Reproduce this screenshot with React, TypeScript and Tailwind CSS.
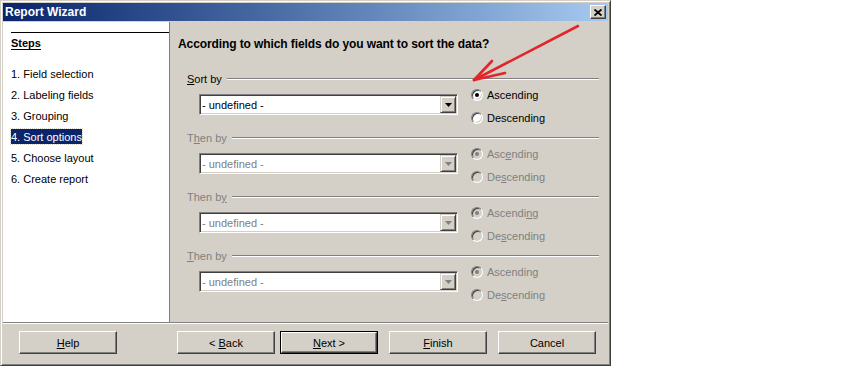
const font = { fontFamily: '"Liberation Sans", Arial, sans-serif' };

const Key = ({ text, k }: { text: string; k: number }) => {
  if (k < 0) return <span className="whitespace-pre">{text}</span>;
  return (
    <span className="whitespace-pre">
      {text.slice(0, k)}
      <span className="underline underline-offset-[1px]">{text[k]}</span>
      {text.slice(k + 1)}
    </span>
  );
};

const Radio = ({ checked, disabled }: { checked: boolean; disabled: boolean }) => (
  <span
    className={`relative flex h-[12px] w-[12px] items-center justify-center rounded-full border border-t-[#808080] border-l-[#808080] border-b-white border-r-white shadow-[inset_1px_1px_#404040,inset_-1px_-1px_#d4d0c8] ${
      disabled ? "bg-[#d4d0c8]" : "bg-white"
    }`}
  >
    {checked && (
      <span className={`h-[4px] w-[4px] rounded-full ${disabled ? "bg-[#808080]" : "bg-black"}`} />
    )}
  </span>
);

const Combo = ({ disabled }: { disabled: boolean }) => (
  <div className="flex h-[21px] w-[259px] items-center border border-t-[#808080] border-l-[#808080] border-b-white border-r-white bg-white shadow-[inset_1px_1px_#404040,inset_-1px_-1px_#d4d0c8]">
    <span className={`flex-1 pl-[2px] text-[11px] leading-[14px] ${disabled ? "text-[#808080]" : "text-black"}`}>
      - undefined -
    </span>
    <span className="mr-[1px] flex h-[17px] w-[16px] items-center justify-center border border-t-[#d4d0c8] border-l-[#d4d0c8] border-b-[#404040] border-r-[#404040] bg-[#d4d0c8] shadow-[inset_1px_1px_#fff,inset_-1px_-1px_#808080]">
      <svg width="7" height="4" viewBox="0 0 7 4">
        <path d="M0 0h7L3.5 4z" fill={disabled ? "#808080" : "#000"} />
      </svg>
    </span>
  </div>
);

type Group = { label: string; lk: number; ak: number; dk: number; disabled: boolean };

const groups: Group[] = [
  { label: "Sort by", lk: 0, ak: -1, dk: -1, disabled: false },
  { label: "Then by", lk: 1, ak: 3, dk: 2, disabled: true },
  { label: "Then by", lk: 6, ak: 7, dk: 2, disabled: true },
  { label: "Then by", lk: 0, ak: 8, dk: 2, disabled: true },
];

const steps = [
  "1. Field selection",
  "2. Labeling fields",
  "3. Grouping",
  "4. Sort options",
  "5. Choose layout",
  "6. Create report",
];

const Button = ({ label, k, def }: { label: string; k: number; def?: boolean }) => (
  <div className={`h-[23px] w-[98px] ${def ? "border border-black" : ""}`}>
    <div className="flex h-full w-full items-center justify-center border border-t-white border-l-white border-b-[#404040] border-r-[#404040] bg-[#d4d0c8] text-[11px] leading-[14px] text-black shadow-[inset_-1px_-1px_#808080]">
      <Key text={label} k={k} />
    </div>
  </div>
);

export default function App() {
  return (
    <div className="relative h-[367px] w-[860px] bg-white" style={font}>
      <div className="h-[366px] w-[611px] border border-t-[#d4d0c8] border-l-[#d4d0c8] border-b-[#404040] border-r-[#404040] bg-[#d4d0c8] p-[2px] shadow-[inset_1px_1px_#fff,inset_-1px_-1px_#808080]">
        {/* title bar */}
        <div className="flex h-[18px] items-center justify-between bg-gradient-to-r from-[#0a246a] to-[#a6caf0] pl-[2px] pr-[2px]">
          <span className="text-[12px] leading-[14px] font-bold text-white">Report Wizard</span>
          <span className="flex h-[14px] w-[16px] items-center justify-center border border-t-white border-l-white border-b-[#404040] border-r-[#404040] bg-[#d4d0c8] shadow-[inset_-1px_-1px_#808080]">
            <svg width="8" height="7" viewBox="0 0 8 7">
              <path d="M0.5 0.5l7 6M7.5 0.5l-7 6" stroke="#000" strokeWidth="1.8" />
            </svg>
          </span>
        </div>

        {/* body */}
        <div className="mt-[1px] flex h-[300px]">
          <div className="w-[167px] border-r border-[#808080] bg-white pl-[8px] pt-[10px]">
            <div className="border-t border-black pt-[3px]">
              <span className="block text-[11px] leading-[14px] font-bold text-black underline underline-offset-[2px]">
                Steps
              </span>
            </div>
            <div className="mt-[13px] flex flex-col">
              {steps.map((s, i) => (
                <div key={i} className="flex h-[21px] items-center">
                  <span
                    className={`flex h-[15px] items-center text-[11px] leading-[14px] ${
                      i === 3 ? "bg-[#0a246a] text-white outline-dotted outline-1 outline-[#d4d0c8]" : "text-black"
                    }`}
                  >
                    {s}
                  </span>
                </div>
              ))}
            </div>
          </div>

          <div className="flex-1 pl-[8px] pt-[15px]">
            <div className="flex h-[14px] items-center text-[12px] leading-[14px] tracking-[-0.1px] font-bold text-black">
              According to which fields do you want to sort the data?
            </div>
            <div className="mt-[21px] flex flex-col">
              {groups.map((g, i) => (
                <div key={i} className="h-[59px] pl-[9px] pr-[9px]">
                  <div className="flex h-[14px] items-center gap-[5px]">
                    <span className={`text-[11px] leading-[14px] ${g.disabled ? "text-[#808080]" : "text-black"}`}>
                      <Key text={g.label} k={g.lk} />
                    </span>
                    <div className="h-[2px] flex-1 border-t border-b border-t-[#808080] border-b-white" />
                  </div>
                  <div className="-mt-[3px] flex">
                    <div className="pl-[12px] pt-[11px]">
                      <Combo disabled={g.disabled} />
                    </div>
                    <div className="ml-[13px] flex flex-col">
                      {[
                        { t: "Ascending", k: g.ak, c: true },
                        { t: "Descending", k: g.dk, c: false },
                      ].map((r, j) => (
                        <div key={j} className="flex h-[23px] items-center gap-[4px]">
                          <Radio checked={r.c} disabled={g.disabled} />
                          <span className={`text-[11px] leading-[14px] ${g.disabled ? "text-[#808080]" : "text-black"}`}>
                            <Key text={r.t} k={r.k} />
                          </span>
                        </div>
                      ))}
                    </div>
                  </div>
                </div>
              ))}
            </div>
          </div>
        </div>

        {/* separator */}
        <div className="h-[2px] border-t border-b border-t-[#808080] border-b-white" />

        {/* footer */}
        <div className="flex pl-[16px] pt-[7px]">
          <Button label="Help" k={0} />
          <div className="ml-[60px] flex">
            <Button label="< Back" k={2} />
            <div className="ml-[5px]">
              <Button label="Next >" k={0} def />
            </div>
            <div className="ml-[11px]">
              <Button label="Finish" k={0} />
            </div>
            <div className="ml-[11px]">
              <Button label="Cancel" k={-1} />
            </div>
          </div>
        </div>
      </div>

      {/* red annotation arrow */}
      <svg className="pointer-events-none absolute left-0 top-0" width="860" height="367">
        <g stroke="#e3242b" strokeWidth="2.6" strokeLinecap="round" fill="none">
          <path d="M578 26L474 80" />
          <path d="M474 80L492 61" />
          <path d="M474 80L505 73" />
        </g>
      </svg>
    </div>
  );
}
